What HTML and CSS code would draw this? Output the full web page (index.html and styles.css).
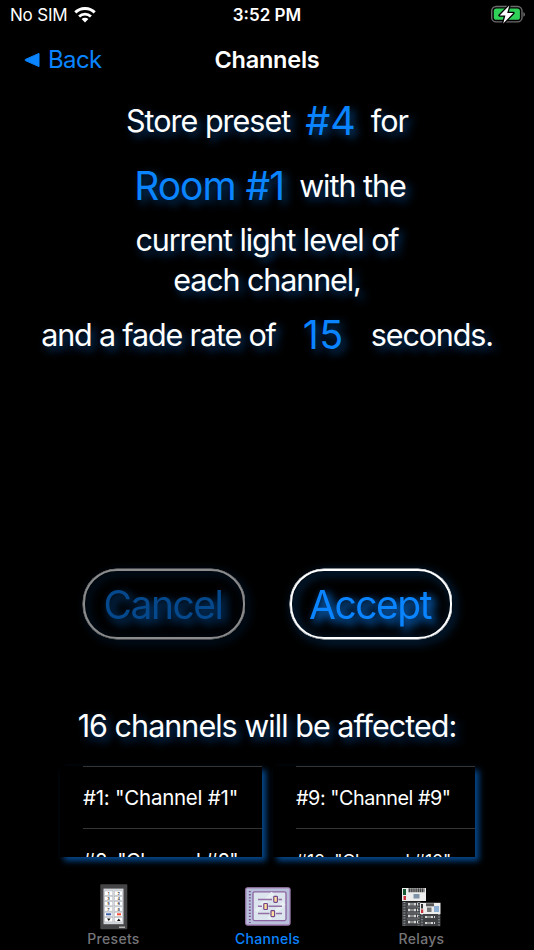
FILE: index.html
```
<!DOCTYPE html>
<html lang="en">
<head>
    <meta charset="UTF-8">
    <meta name="viewport" content="width=device-width, initial-scale=1.0">
    <title>Channels</title>
    <link rel="stylesheet" href="styles.css">
</head>
<body>
    <div class="status-bar">
        <div class="status-left">
            <span class="carrier">No SIM</span>
            <svg class="wifi" width="22" height="16" viewBox="0 0 22 16">
                <path d="M1.3 5.4 A14 14 0 0 1 20.7 5.4" fill="none" stroke="#fff" stroke-width="3"/>
                <path d="M5.1 9.4 A8.6 8.6 0 0 1 16.9 9.4" fill="none" stroke="#fff" stroke-width="2.8"/>
                <path d="M11 15.6 L7.6 12.1 A4.9 4.9 0 0 1 14.4 12.1 Z" fill="#fff"/>
            </svg>
        </div>
        <span class="clock">3:52 PM</span>
        <svg class="battery" width="36" height="20" viewBox="0 0 36 20">
            <rect x="1.7" y="1.5" width="30.3" height="15.4" rx="4.5" fill="none" stroke="#6b6b6d" stroke-width="1.4"/>
            <rect x="3.8" y="3.6" width="26.1" height="11.2" rx="2.6" fill="#30d158"/>
            <path d="M33.3 7 Q35 7.6 35 9.4 Q35 11.2 33.3 11.8 Z" fill="#6b6b6d"/>
            <path d="M19.3 .6 L9.6 10.4 H15.4 L13.2 18.4 L23.3 8 H17.2 Z" fill="#fff" stroke="#000" stroke-width="2.6" paint-order="stroke" stroke-linejoin="round"/>
        </svg>
    </div>
    <div class="nav-bar">
        <a class="back">
            <svg width="16" height="16" viewBox="0 0 16 16"><path d="M15 1.4 V14.6 L1.4 8.6 Q.2 8 1.4 7.4 Z" fill="#0a84ff" stroke="#0a84ff" stroke-linejoin="round"/></svg>
            <span>Back</span>
        </a>
        <h1 class="nav-title">Channels</h1>
    </div>

    <div class="message">
        <div class="line line-preset">
            <span>Store preset</span>
            <span class="value">#4</span>
            <span>for</span>
        </div>
        <div class="line line-room">
            <span class="value value-room">Room #1</span>
            <span>with the</span>
        </div>
        <div class="line-level">current light level of<br>each channel,</div>
        <div class="line line-fade">
            <span>and a fade rate of</span>
            <span class="value value-rate">15</span>
            <span>seconds.</span>
        </div>
    </div>

    <div class="buttons">
        <button class="btn btn-cancel">Cancel</button>
        <button class="btn btn-accept">Accept</button>
    </div>

    <h2 class="affected">16 channels will be affected:</h2>
    <div class="lists">
        <div class="list">
            <div class="row">#1: "Channel #1"</div>
            <div class="row row-next">#2: "Channel #2"</div>
        </div>
        <div class="list">
            <div class="row row-tight">#9: "Channel #9"</div>
            <div class="row row-next row-small">#10: "Channel #10"</div>
        </div>
    </div>

    <div class="tab-bar">
        <div class="tab">
            <svg width="28" height="46" viewBox="0 0 28 46">
                <rect x=".3" y=".3" width="27" height="45" rx="1" fill="#454547"/>
                <rect x="3.5" y="4.6" width="20" height="35.6" fill="#d4d7dc"/>
                <g fill="#fff" stroke="#aeb2b8" stroke-width=".5">
                    <rect x="4.6" y="7" width="8.2" height="4.2"/><rect x="14.4" y="7" width="8.2" height="4.2"/>
                    <rect x="4.6" y="12.3" width="8.2" height="4.2"/><rect x="14.4" y="12.3" width="8.2" height="4.2"/>
                    <rect x="4.6" y="17.6" width="8.2" height="4.2"/><rect x="14.4" y="17.6" width="8.2" height="4.2"/>
                    <rect x="4.6" y="22.9" width="8.2" height="4.2"/><rect x="14.4" y="22.9" width="8.2" height="4.2"/>
                    <rect x="4.6" y="28.2" width="8.2" height="4.2"/><rect x="14.4" y="28.2" width="8.2" height="4.2"/>
                    <rect x="4.6" y="33.5" width="8.2" height="4.4"/><rect x="14.4" y="33.5" width="8.2" height="4.4"/>
                </g>
                <g class="keys">
                    <text x="8.5" y="10.7">1</text><text x="18.8" y="10.7">2</text>
                    <text x="8.5" y="16">3</text><text x="18.8" y="16">4</text>
                    <text x="8.5" y="21.3">5</text><text x="18.8" y="21.3">6</text>
                    <text x="8.5" y="26.6">7</text><text x="18.8" y="26.6">8</text>
                </g>
                <path d="M6 30.3h5.2" stroke="#3c5fa8" stroke-width="2"/>
                <path d="M17 30.3h4" stroke="#ff4a32" stroke-width="2"/>
                <path d="M7 34.6h3.6l-1.8 2.3zM17 36.9h3.6l-1.8-2.3z" fill="#111"/>
                <path d="M19 43.2h6" stroke="#ccc" stroke-width="1.2"/>
            </svg>
            <span>Presets</span>
        </div>
        <div class="tab active">
            <svg width="46" height="43" viewBox="0 0 46 43">
                <rect x=".8" y=".8" width="44.2" height="37.2" rx="1.8" fill="#b8bfdb" stroke="#a280b5" stroke-width="1.3"/>
                <path d="M4.8 4v32" stroke="#75528f" stroke-width="1.9" stroke-dasharray="1.3 1.8"/>
                <rect x="8" y="4.8" width="33" height="28.8" rx="1.5" fill="#dce5ed" stroke="#8a63a0" stroke-width="1.3"/>
                <path d="M11 24L28 6M24 32L39 16" stroke="#e9f0f4" stroke-width="4"/>
                <path d="M13 12.5h14M33.5 12.5h3.5M13 19.3h4M23.5 19.3h13.5M13 26.5h11.5M31 26.5h6" stroke="#9270a5" stroke-width="1.5"/>
                <g fill="#ffe199" stroke="#75468a" stroke-width="1.2">
                    <rect x="28.8" y="9.3" width="3.6" height="6" rx=".8"/>
                    <rect x="18.8" y="16.5" width="3.6" height="6" rx=".8"/>
                    <rect x="26" y="23.6" width="3.6" height="6" rx=".8"/>
                </g>
            </svg>
            <span>Channels</span>
        </div>
        <div class="tab">
            <svg width="40" height="42" viewBox="0 0 40 42">
                <rect x="0" y="0" width="24" height="13" fill="#ededed"/>
                <path d="M6.5 2.2h16" stroke="#444" stroke-width="4" stroke-dasharray="1.5 .4"/>
                <rect x="1" y="1" width="3" height="6" fill="#175b35"/><rect x="1.5" y="8" width="2.5" height="4" fill="#c7333b"/>
                <rect x="11.5" y="6" width="6" height="4.5" fill="#7e93a8"/>
                <rect x="0" y="13.5" width="18.5" height="24.5" fill="#3f4145"/>
                <path d="M2.4 14v24M16.6 14v24" stroke="#96999c" stroke-width="2" stroke-dasharray="1 1.6"/>
                <path d="M6 16.2h10M6 22h10M6 28h10M6 34h10" stroke="#d5d5d5" stroke-width="2.4" stroke-dasharray="2.5 1 1 1"/>
                <path d="M5 19h11M5 25h11M5 31h11" stroke="#77797c"/>
                <rect x="18" y="14.8" width="20.5" height="11.2" fill="#ededed"/>
                <path d="M24 16.8h8" stroke="#555" stroke-width="3"/>
                <rect x="19" y="16" width="2" height="4.5" fill="#333"/><rect x="19" y="21.4" width="2.2" height="3.6" fill="#c7333b"/>
                <rect x="25" y="19.5" width="4.5" height="4.5" fill="#777"/><rect x="32" y="18" width="5" height="6" fill="#8dafd3"/>
                <rect x="18" y="26" width="20.5" height="12.2" fill="#3f4145"/>
                <path d="M20 26v12M37 26v12" stroke="#96999c" stroke-width="1.8" stroke-dasharray="1 1.6"/>
                <path d="M23 29h11M23 35h11" stroke="#d5d5d5" stroke-width="2.2" stroke-dasharray="2.5 1 1 1"/>
            </svg>
            <span>Relays</span>
        </div>
    </div>
</body>
</html>
```

FILE: styles.css
```
* {
    box-sizing: border-box;
}

body {
    margin: 0;
    width: 534px;
    height: 950px;
    overflow: hidden;
    background-color: #000;
    color: #fff;
    font-family: Inter, sans-serif;
    display: flex;
    flex-direction: column;
}

h1, h2 {
    margin: 0;
}

.status-bar {
    height: 30px;
    padding: 0 8px 0 10px;
    display: grid;
    grid-template-columns: 1fr auto 1fr;
    align-items: center;
    font-size: 17px;
}

.status-left {
    display: flex;
    align-items: center;
    gap: 7px;
}

.carrier {
    letter-spacing: -0.2px;
}

.clock {
    margin-right: 2px;
    font-weight: 600;
}

.battery {
    justify-self: end;
}

.nav-bar {
    height: 59px;
    padding: 0 24px;
    display: grid;
    grid-template-columns: 1fr auto 1fr;
    align-items: center;
    font-size: 24px;
}

.back {
    display: flex;
    align-items: center;
    gap: 8px;
    color: #0a84ff;
    letter-spacing: -0.6px;
}

.nav-title {
    font-size: 23.5px;
    font-weight: 600;
    letter-spacing: -0.25px;
}

.message {
    height: 479px;
    font-size: 30.5px;
    letter-spacing: -1.1px;
    text-shadow: 4px 4px 8px rgba(10, 132, 255, 0.5);
    white-space: nowrap;
}

.line {
    display: flex;
    align-items: center;
    justify-content: center;
}

.line-preset {
    height: 63px;
    gap: 15px;
    letter-spacing: -1px;
}

.line-room {
    height: 67px;
    gap: 15px;
    padding-left: 6px;
    letter-spacing: -1px;
}

.line-level {
    margin-top: 1px;
    line-height: 40px;
    text-align: center;
}

.line-fade {
    height: 69px;
    gap: 27px;
    letter-spacing: -1.15px;
}

.value {
    color: #0a84ff;
    font-size: 39.5px;
    letter-spacing: 0;
}

.value-room {
    font-size: 39px;
    letter-spacing: -1px;
}

.value-rate {
    letter-spacing: 0.5px;
}

.buttons {
    display: flex;
    justify-content: center;
    gap: 45px;
    height: 72px;
    padding-top: 1px;
}

.btn {
    width: 162px;
    height: 70px;
    padding: 0;
    border: 2px solid #fff;
    border-radius: 34px;
    box-shadow: 0 0 0 0.5px #fff;
    background: none;
    color: #0a84ff;
    font-family: inherit;
    font-size: 39px;
    letter-spacing: -1.5px;
    text-indent: -1px;
    text-shadow: 4px 4px 8px rgba(10, 132, 255, 0.5);
    filter: drop-shadow(3px 3px 5px rgba(10, 132, 255, 0.65));
}

.btn-cancel {
    opacity: 0.55;
}

.affected {
    height: 126px;
    padding-top: 66px;
    line-height: 40px;
    font-size: 30.5px;
    font-weight: 400;
    letter-spacing: -0.97px;
    text-align: center;
    text-shadow: 4px 4px 8px rgba(10, 132, 255, 0.5);
}

.lists {
    display: flex;
    gap: 11px;
    padding-left: 60px;
}

.list {
    width: 202px;
    height: 91px;
    padding-left: 23px;
    overflow: hidden;
    background-color: #000;
    box-shadow: 4px 4px 6px rgba(10, 132, 255, 0.55);
}

.row {
    height: 62px;
    line-height: 62px;
    border-top: 1px solid #353537;
    font-size: 20.5px;
    letter-spacing: -0.25px;
    white-space: nowrap;
}

.row-tight {
    font-size: 19.8px;
    letter-spacing: -0.45px;
}

.row-next {
    line-height: 64px;
    font-size: 20px;
    letter-spacing: -0.5px;
}

.row-small {
    font-size: 17.8px;
    letter-spacing: -0.3px;
}

.tab-bar {
    flex: 1;
    padding: 0 36px;
    display: grid;
    grid-template-columns: repeat(3, 154px);
    color: #757578;
    font-size: 14px;
    font-weight: 500;
    letter-spacing: 0.3px;
}

.tab {
    display: flex;
    flex-direction: column;
    align-items: center;
    justify-content: flex-end;
    padding: 0 0 2px 1px;
    line-height: 18px;
}

.active {
    color: #0a84ff;
}

.keys {
    fill: #222;
    font-size: 4px;
    letter-spacing: 0;
    text-anchor: middle;
}
```
